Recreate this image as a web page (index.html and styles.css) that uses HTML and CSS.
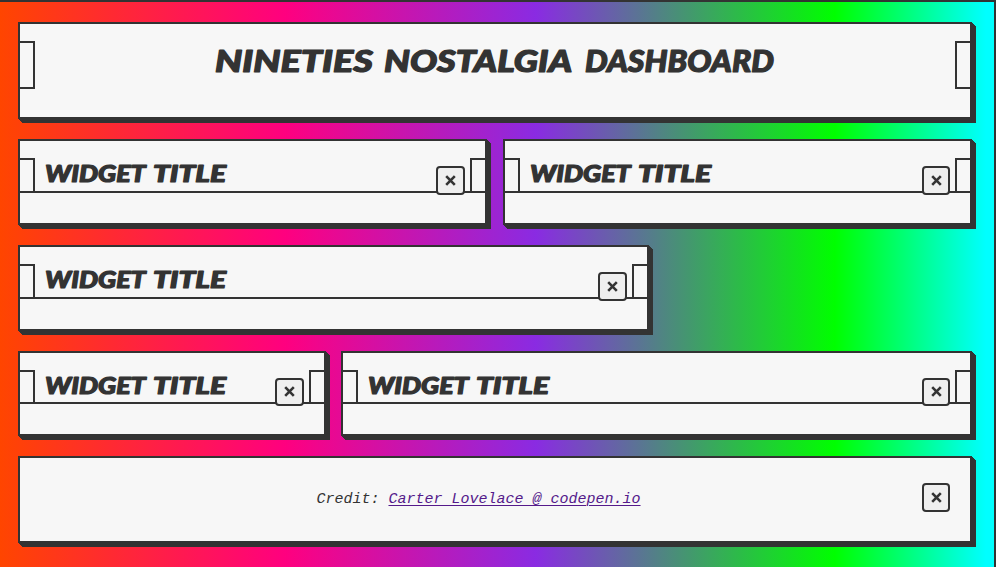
FILE: index.html
```html
<!DOCTYPE html>
<html lang="en">
<head>
<meta charset="utf-8">
<title>Nineties Nostalgia Dashboard</title>
<link rel="stylesheet" href="styles.css">
</head>
<body>
<main class="dashboard">
  <header class="card banner"><h1><svg class="fit" width="564" height="40"><text y="31"><tspan x="2" textLength="158" lengthAdjust="spacingAndGlyphs">NINETIES</tspan> <tspan x="171" textLength="187" lengthAdjust="spacingAndGlyphs">NOSTALGIA</tspan> <tspan x="372" textLength="189" lengthAdjust="spacingAndGlyphs">DASHBOARD</tspan></text></svg></h1></header>
  <div class="row">
    <section class="card widget half"><div class="bar"><h2><svg class="fit" width="184" height="30"><text y="23"><tspan x="1" textLength="100" lengthAdjust="spacingAndGlyphs">WIDGET</tspan> <tspan x="109" textLength="73" lengthAdjust="spacingAndGlyphs">TITLE</tspan></text></svg></h2></div><button class="close" aria-label="Close"><svg width="11" height="11" viewBox="0 0 11 11"><path d="M1.2 1.2l8.600 8.600M9.800 1.200l-8.600 8.600"/></svg></button></section>
    <section class="card widget half"><div class="bar"><h2><svg class="fit" width="184" height="30"><text y="23"><tspan x="1" textLength="100" lengthAdjust="spacingAndGlyphs">WIDGET</tspan> <tspan x="109" textLength="73" lengthAdjust="spacingAndGlyphs">TITLE</tspan></text></svg></h2></div><button class="close slim" aria-label="Close"><svg width="11" height="11" viewBox="0 0 11 11"><path d="M1.2 1.2l8.600 8.600M9.800 1.200l-8.600 8.600"/></svg></button></section>
  </div>
  <div class="row">
    <section class="card widget wide"><div class="bar"><h2><svg class="fit" width="184" height="30"><text y="23"><tspan x="1" textLength="100" lengthAdjust="spacingAndGlyphs">WIDGET</tspan> <tspan x="109" textLength="73" lengthAdjust="spacingAndGlyphs">TITLE</tspan></text></svg></h2></div><button class="close" aria-label="Close"><svg width="11" height="11" viewBox="0 0 11 11"><path d="M1.2 1.2l8.600 8.600M9.800 1.200l-8.600 8.600"/></svg></button></section>
  </div>
  <div class="row compact">
    <section class="card widget narrow"><div class="bar"><h2><svg class="fit" width="184" height="30"><text y="23"><tspan x="1" textLength="100" lengthAdjust="spacingAndGlyphs">WIDGET</tspan> <tspan x="109" textLength="73" lengthAdjust="spacingAndGlyphs">TITLE</tspan></text></svg></h2></div><button class="close" aria-label="Close"><svg width="11" height="11" viewBox="0 0 11 11"><path d="M1.2 1.2l8.600 8.600M9.800 1.200l-8.600 8.600"/></svg></button></section>
    <section class="card widget wide"><div class="bar"><h2><svg class="fit" width="184" height="30"><text y="23"><tspan x="1" textLength="100" lengthAdjust="spacingAndGlyphs">WIDGET</tspan> <tspan x="109" textLength="73" lengthAdjust="spacingAndGlyphs">TITLE</tspan></text></svg></h2></div><button class="close slim" aria-label="Close"><svg width="11" height="11" viewBox="0 0 11 11"><path d="M1.2 1.2l8.600 8.600M9.800 1.200l-8.600 8.600"/></svg></button></section>
  </div>
  <footer class="card credit"><p>Credit: <a href="#">Carter Lovelace @ codepen.io</a></p><button class="close slim" aria-label="Close"><svg width="11" height="11" viewBox="0 0 11 11"><path d="M1.2 1.2l8.600 8.600M9.800 1.200l-8.600 8.600"/></svg></button></footer>
</main>
</body>
</html>
```
FILE: styles.css
```css
*, *::before, *::after { box-sizing: border-box; }
html { height: 100%; overflow: hidden; }
body {
  margin: 0;
  height: 100%;
  color: #333;
  border-top: 2px solid #333;
  border-right: 2px solid #333;
  background: linear-gradient(90deg, #ff4500 0%, #ff007f 28.600%, #8a2be2 53.800%, #0f0 83.800%, #0ff 99%) padding-box;
}
.dashboard {
  display: flex;
  flex-direction: column;
  gap: 20px;
  padding: 20px 22px 20px 18px;
}
.row { display: flex; gap: 16px; height: 86px; }
.row.compact { height: 85px; gap: 15px; }
.card {
  position: relative;
  background: #f7f7f7;
  border: 2px solid #333;
  box-shadow: 1px 1px #333, 2px 2px #333, 3px 3px #333, 4px 4px #333;
}
.half { width: 469px; }
.wide { width: 631px; }
.narrow { width: 308px; }
h1, h2, p { margin: 0; }
.fit { display: block; overflow: visible; }
.fit text {
  fill: #333;
  stroke: #333;
  stroke-width: 1.2px;
  stroke-linejoin: round;
  font-family: Lato, sans-serif;
  font-weight: 900;
  font-style: italic;
}
.banner {
  height: 97px;
  display: flex;
  justify-content: center;
  padding-top: 17px;
}
.banner .fit text { font-size: 30px; }
.banner::before, .banner::after,
.bar::before, .bar::after {
  content: "";
  position: absolute;
  top: 17px;
  width: 15px;
  height: 48px;
  border: 2px solid #333;
}
.banner::before, .bar::before { left: 0; border-left: 0; }
.banner::after, .bar::after { right: 0; border-right: 0; }
.bar {
  position: relative;
  height: 52px;
  padding: 18px 0 0 24px;
  border-bottom: 2px solid #333;
}
.compact .bar { height: 51px; }
.bar::before, .bar::after { height: 33px; border-bottom: 0; }
.bar .fit text { font-size: 23px; }
.close {
  position: absolute;
  right: 20px;
  top: 25px;
  width: 29px;
  height: 29px;
  padding: 0 0 1px;
  display: grid;
  place-items: center;
  border: 2px solid #333;
  border-radius: 4px;
  background: #efefef;
}
.slim { width: 28px; }
.compact .close { height: 28px; }
.close path { fill: none; stroke: #333; stroke-width: 2.600; }
.credit {
  height: 87px;
  padding: 33px 33px 0 0;
  text-align: center;
  font: italic 15px/17px "Liberation Mono", monospace;
}
.credit a { color: #551a8b; text-underline-offset: 2px; text-decoration-thickness: 1px; }
```
